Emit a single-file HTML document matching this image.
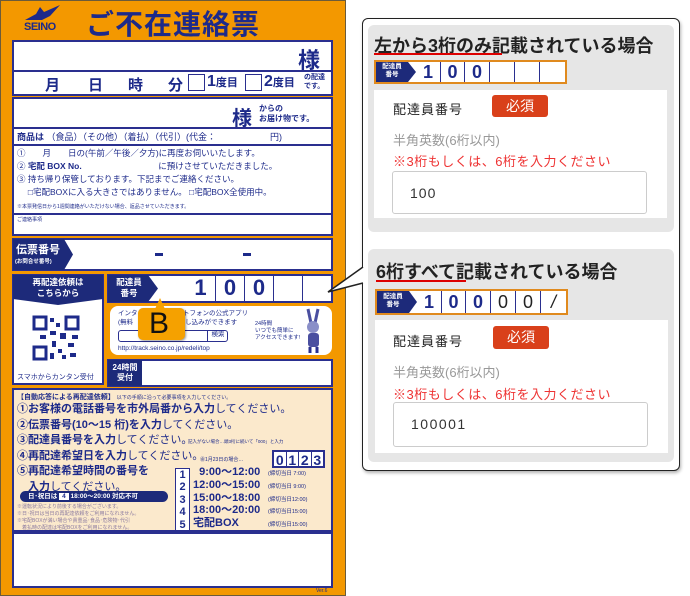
<!DOCTYPE html>
<html><head><meta charset="utf-8"><style>
*{margin:0;padding:0;box-sizing:border-box}
body{width:690px;height:596px;background:#fff;position:relative;overflow:hidden;font-family:"Liberation Sans","Noto Sans CJK JP",sans-serif;color:#1d2a8a}
.a{position:absolute}
.w{background:#fff;border:2px solid #2a2f8f}
.b{font-weight:bold}
.dk{background:#1d2a7a;color:#fff}
.t{white-space:nowrap}
.cell{position:absolute;top:0;height:100%;border-left:1.5px solid #2a2f8f;text-align:center;font-weight:bold}
.card{background:#e6e6e6;border-radius:6px}
.inner{background:#fff}
.badge{background:#d9401a;color:#fff;border-radius:3px;text-align:center;font-size:14px}
.inp{background:#fff;border:1px solid #ccc;border-radius:3px;color:#333;font-size:14px}
.k{color:#222}
</style></head><body>
<!-- LEFT FORM -->
<div class="a" style="left:0;top:0;width:346px;height:596px;background:#f39800;border:1px solid #6b5b3a"></div>
<div class="a b t" style="left:24px;top:21px;font-size:11px;letter-spacing:-0.5px">SEINO</div>
<svg class="a" style="left:22px;top:4px" width="40" height="18"><path d="M3 16 L14 10 L18 3 L22 8 L38 1 L28 12 L20 16Z" fill="#1d2a8a"/></svg>
<div class="a b t" style="left:86px;top:3px;font-size:28px;letter-spacing:1px">ご不在連絡票</div>

<div class="a w" style="left:12px;top:40px;width:321px;height:56px"></div>
<div class="a" style="left:12px;top:70px;width:321px;height:2px;background:#2a2f8f"></div>
<div class="a b t" style="left:298px;top:43px;font-size:22px">様</div>
<div class="a b t" style="left:45px;top:74px;font-size:15px">月</div>
<div class="a b t" style="left:88px;top:74px;font-size:15px">日</div>
<div class="a b t" style="left:128px;top:74px;font-size:15px">時</div>
<div class="a b t" style="left:168px;top:74px;font-size:15px">分</div>
<div class="a" style="left:188px;top:74px;width:17px;height:17px;border:1.5px solid #2a2f8f"></div>
<div class="a b t" style="left:207px;top:73px;font-size:16px">1<span style="font-size:11px">度目</span></div>
<div class="a" style="left:245px;top:74px;width:17px;height:17px;border:1.5px solid #2a2f8f"></div>
<div class="a b t" style="left:264px;top:73px;font-size:16px">2<span style="font-size:11px">度目</span></div>
<div class="a b" style="left:304px;top:73px;font-size:7px;line-height:9px">の配達<br>です。</div>

<div class="a w" style="left:12px;top:97px;width:321px;height:139px"></div>
<div class="a b t" style="left:232px;top:102px;font-size:20px">様</div>
<div class="a b" style="left:259px;top:104px;font-size:8px;line-height:10px">からの<br>お届け物です。</div>
<div class="a" style="left:12px;top:127px;width:321px;height:1.5px;background:#2a2f8f"></div>
<div class="a t" style="left:17px;top:130px;font-size:9px"><b>商品は</b> （食品）（その他）（着払）（代引）(代金：　　　　　　円)</div>
<div class="a" style="left:12px;top:144px;width:321px;height:1.5px;background:#2a2f8f"></div>
<div class="a t" style="left:17px;top:147px;font-size:8.5px;line-height:13px">①　　月　　日の(午前／午後／夕方)に再度お伺いいたします。<br>② <b>宅配 BOX No.</b>　　　　　　　　　に預けさせていただきました。<br>③ 持ち帰り保管しております。下記までご連絡ください。<br>　 □宅配BOXに入る大きさではありません。 □宅配BOX全使用中。</div>
<div class="a t" style="left:17px;top:203px;font-size:5px">※本票発信日から1週間連絡がいただけない場合、返品させていただきます。</div>
<div class="a" style="left:12px;top:213px;width:321px;height:1.5px;background:#2a2f8f"></div>
<div class="a t" style="left:17px;top:216px;font-size:5px">ご連絡事項</div>

<div class="a w" style="left:12px;top:238px;width:321px;height:33px"></div>
<div class="a dk" style="left:13px;top:239px;width:60px;height:31px;clip-path:polygon(0 0,85% 0,100% 50%,85% 100%,0 100%)"></div>
<div class="a b t" style="left:16px;top:241px;font-size:11px;color:#fff">伝票番号</div>
<div class="a b t" style="left:15px;top:257px;font-size:5.5px;color:#fff">(お問合せ番号)</div>
<div class="a" style="left:155px;top:253px;width:8px;height:3px;background:#1d2a8a"></div>
<div class="a" style="left:243px;top:253px;width:8px;height:3px;background:#1d2a8a"></div>

<div class="a w" style="left:12px;top:274px;width:92px;height:111px"></div>
<div class="a dk" style="left:13px;top:275px;width:90px;height:30px;clip-path:polygon(0 0,100% 0,100% 80%,50% 100%,0 80%)"></div>
<div class="a b" style="left:13px;top:277px;width:90px;text-align:center;font-size:8.5px;line-height:11px;color:#fff">再配達依頼は<br>こちらから</div>
<svg class="a" style="left:32px;top:315px" width="50" height="46"><rect x="2" y="2" width="12" height="12" fill="none" stroke="#1d2a8a" stroke-width="3"/><rect x="34" y="2" width="12" height="12" fill="none" stroke="#1d2a8a" stroke-width="3"/><rect x="2" y="32" width="12" height="12" fill="none" stroke="#1d2a8a" stroke-width="3"/><path d="M18 3h4v4h-4zM24 8h4v4h-4zM18 16h6v4h-6zM28 18h6v6h-6zM8 20h6v4h-6zM20 26h4v6h-4zM36 28h6v4h-6zM26 34h4v4h-4zM38 38h6v4h-6zM18 38h4v6h-4zM30 40h4v4h-4zM40 20h6v4h-6z" fill="#1d2a8a"/></svg>
<div class="a t" style="left:17px;top:372px;font-size:7px">スマホからカンタン受付</div>

<div class="a w" style="left:107px;top:274px;width:226px;height:29px"></div>
<div class="a dk" style="left:108px;top:275px;width:50px;height:27px;clip-path:polygon(0 0,80% 0,100% 50%,80% 100%,0 100%)"></div>
<div class="a b" style="left:110px;top:277px;width:38px;text-align:center;font-size:8.5px;line-height:11px;color:#fff">配達員<br>番号</div>
<div class="a" style="left:107px;top:274px;width:226px;height:29px">
<div class="cell" style="left:79px;width:29px;border:none;font-size:22px;line-height:28px">1</div>
<div class="cell" style="left:108px;width:29px;font-size:22px;line-height:28px">0</div>
<div class="cell" style="left:137px;width:29px;font-size:22px;line-height:28px">0</div>
<div class="cell" style="left:166px;width:29px"></div>
<div class="cell" style="left:195px;width:29px"></div>
</div>

<div class="a" style="left:110px;top:306px;width:222px;height:49px;background:#fff;border-radius:8px"></div>
<div class="a t" style="left:118px;top:309px;font-size:6.5px;line-height:9px">インタ　　　　　　　トフォンの公式アプリ<br>(無料　　　　　　　　し込みができます</div>
<div class="a" style="left:118px;top:330px;width:110px;height:12px;border:1.5px solid #2a2f8f;border-radius:3px"></div>
<div class="a" style="left:207px;top:330px;width:21px;height:12px;border-left:1.5px solid #2a2f8f;font-size:6.5px;text-align:center;line-height:10px">検索</div>
<div class="a t" style="left:118px;top:345px;font-size:6.5px">http://track.seino.co.jp/redeli/top</div>
<div class="a t" style="left:255px;top:321px;font-size:5.5px;line-height:7px">24時間<br>いつでも簡単に<br>アクセスできます!</div>
<svg class="a" style="left:298px;top:307px" width="32" height="48"><path d="M10 2l3 14M20 2l-3 14" stroke="#4a4fa0" stroke-width="3"/><ellipse cx="15" cy="20" rx="6" ry="6" fill="#8a8fc8"/><rect x="10" y="26" width="11" height="14" rx="3" fill="#4a4fa0"/><path d="M12 40v6M19 40v6" stroke="#2a2f8f" stroke-width="3"/></svg>
<div class="a" style="left:138px;top:308px;width:47px;height:32px;background:#f5a100;border-radius:5px;box-shadow:1px 1px 2px rgba(0,0,0,.4)"></div>
<div class="a" style="left:155px;top:298px;width:0;height:0;border-left:5px solid transparent;border-right:5px solid transparent;border-bottom:11px solid #f5a100"></div>
<div class="a t" style="left:149px;top:307px;font-size:30px;color:#111">B</div>

<div class="a w" style="left:107px;top:359px;width:226px;height:28px"></div>
<div class="a dk b" style="left:108px;top:360px;width:34px;height:26px;font-size:8px;line-height:10px;text-align:center;padding-top:3px">24時間<br>受付</div>

<div class="a" style="left:12px;top:388px;width:321px;height:144px;background:#fbe9cc;border:2px solid #2a2f8f"></div>
<div class="a t" style="left:17px;top:392px;font-size:7px"><b>【自動応答による再配達依頼】</b> <span style="font-size:5px">以下の手順に沿って必要事項を入力してください。</span></div>
<div class="a b t" style="left:17px;top:402px;font-size:11px;line-height:15.6px">①お客様の電話番号を市外局番から入力<span style="font-weight:normal">してください。</span><br>②伝票番号(10～15 桁)を入力<span style="font-weight:normal">してください。</span><br>③配達員番号を入力<span style="font-weight:normal">してください。</span><br>④再配達希望日を入力<span style="font-weight:normal">してください。</span><br>⑤再配達希望時間の番号を<br>　入力<span style="font-weight:normal">してください。</span></div>
<div class="a t" style="left:188px;top:439px;font-size:4.5px">記入がない場合…頭3桁に続いて「000」と入力</div>
<div class="a t" style="left:200px;top:456px;font-size:5px">㊎1月23日の場合…</div>
<div class="a b" style="left:272px;top:450px;width:53px;height:18px;border:2px solid #2a2f8f;background:#fff;font-size:14px;display:flex"><span style="flex:1;text-align:center;border-right:1px solid #2a2f8f">0</span><span style="flex:1;text-align:center;border-right:1px solid #2a2f8f">1</span><span style="flex:1;text-align:center;border-right:1px solid #2a2f8f">2</span><span style="flex:1;text-align:center">3</span></div>
<div class="a dk b t" style="left:20px;top:491px;width:148px;height:11px;border-radius:6px;font-size:6.5px;line-height:11px;padding-left:8px">日･祝日は <span style="background:#fff;color:#1d2a8a;padding:0 3px">4</span> 18:00～20:00 対応不可</div>
<div class="a t" style="left:17px;top:504px;font-size:5px;line-height:7px;color:#8a7aa0">※運転状況により前後する場合がございます。<br>※日･祝日は当日の再配達依頼をご利用になれません。<br>※宅配BOXが満い場合や貴重品･食品･危険物･代引<br>　着払時の配達は宅配BOXをご利用になれません。</div>
<div class="a b" style="left:175px;top:468px;width:15px;height:63px;border:1.5px solid #2a2f8f;background:#fff;font-size:11px;line-height:12.4px;text-align:center">1<br>2<br>3<br>4<br>5</div>
<div class="a b t" style="left:193px;top:466px;font-size:11px;line-height:12.8px">&nbsp;&nbsp;9:00～12:00<br>12:00～15:00<br>15:00～18:00<br>18:00～20:00<br>宅配BOX</div>
<div class="a t" style="left:268px;top:468px;font-size:5.5px;line-height:12.8px">(締切当日 7:00)<br>(締切当日 9:00)<br>(締切当日12:00)<br>(締切当日15:00)<br>(締切当日15:00)</div>

<div class="a w" style="left:12px;top:532px;width:321px;height:56px"></div>
<div class="a t" style="left:316px;top:588px;font-size:5px">Ver.6</div>

<!-- RIGHT PANEL -->
<div class="a" style="left:362px;top:18px;width:318px;height:453px;border:1.5px solid #222;border-radius:6px;background:#fff;box-shadow:1px 2px 3px rgba(0,0,0,.3)"></div>
<svg class="a" style="left:320px;top:255px" width="50" height="45"><path d="M8 37 L43 12 L43 28Z" fill="#fff"/><path d="M43 12 L8 37 L43 28" fill="none" stroke="#222" stroke-width="1.5"/></svg>

<div class="a card" style="left:368px;top:25px;width:306px;height:207px"></div>
<div class="a b t k" style="left:374px;top:32px;font-size:18px">左から3桁のみ記載されている場合</div>
<div class="a" style="left:374px;top:53px;width:128px;height:2px;border-top:1px solid #d00;border-bottom:1px solid #d00"></div>
<div class="a" style="left:374px;top:60px;width:193px;height:24px;border:2px solid #e08a1e;background:#fff"></div>
<div class="a dk" style="left:376px;top:62px;width:40px;height:20px;clip-path:polygon(0 0,80% 0,100% 50%,80% 100%,0 100%)"></div>
<div class="a b" style="left:376px;top:63px;width:32px;text-align:center;font-size:6.5px;line-height:8px;color:#fff">配達員<br>番号</div>
<div class="a" style="left:376px;top:62px;width:189px;height:20px">
<div class="cell" style="left:40px;width:24px;border:none;font-size:18px;line-height:20px">1</div>
<div class="cell" style="left:64px;width:24px;font-size:18px;line-height:20px">0</div>
<div class="cell" style="left:88px;width:25px;font-size:18px;line-height:20px">0</div>
<div class="cell" style="left:113px;width:25px"></div>
<div class="cell" style="left:138px;width:25px"></div>
<div class="cell" style="left:163px;width:26px"></div>
</div>
<div class="a inner" style="left:374px;top:90px;width:293px;height:128px"></div>
<div class="a t k" style="left:393px;top:99px;font-size:13px;letter-spacing:1px">配達員番号</div>
<div class="a badge" style="left:492px;top:95px;width:56px;height:22px;line-height:22px">必須</div>
<div class="a t" style="left:393px;top:130px;font-size:13px;color:#999">半角英数(6桁以内)</div>
<div class="a t" style="left:393px;top:151px;font-size:13px;color:#e33;letter-spacing:0.5px">※3桁もしくは、6桁を入力ください</div>
<div class="a inp" style="left:392px;top:171px;width:255px;height:43px;padding:13px 0 0 17px;letter-spacing:1px">100</div>

<div class="a card" style="left:368px;top:249px;width:306px;height:213px"></div>
<div class="a b t k" style="left:376px;top:258px;font-size:18px">6桁すべて記載されている場合</div>
<div class="a" style="left:376px;top:280px;width:90px;height:2px;border-top:1px solid #d00;border-bottom:1px solid #d00"></div>
<div class="a" style="left:375px;top:289px;width:193px;height:26px;border:2px solid #e08a1e;background:#fff"></div>
<div class="a dk" style="left:377px;top:291px;width:40px;height:22px;clip-path:polygon(0 0,80% 0,100% 50%,80% 100%,0 100%)"></div>
<div class="a b" style="left:377px;top:293px;width:32px;text-align:center;font-size:6.5px;line-height:8px;color:#fff">配達員<br>番号</div>
<div class="a" style="left:377px;top:291px;width:189px;height:22px">
<div class="cell" style="left:40px;width:24px;border:none;font-size:18px;line-height:22px">1</div>
<div class="cell" style="left:64px;width:24px;font-size:18px;line-height:22px">0</div>
<div class="cell" style="left:88px;width:25px;font-size:18px;line-height:22px">0</div>
<div class="cell" style="left:113px;width:25px;font-size:18px;line-height:22px;color:#222;font-weight:normal">0</div>
<div class="cell" style="left:138px;width:25px;font-size:18px;line-height:22px;color:#222;font-weight:normal">0</div>
<div class="cell" style="left:163px;width:26px;font-size:18px;line-height:22px;color:#222;font-weight:normal;font-style:italic">/</div>
</div>
<div class="a inner" style="left:375px;top:320px;width:293px;height:133px"></div>
<div class="a t k" style="left:393px;top:331px;font-size:13px;letter-spacing:1px">配達員番号</div>
<div class="a badge" style="left:493px;top:326px;width:56px;height:23px;line-height:23px">必須</div>
<div class="a t" style="left:393px;top:362px;font-size:13px;color:#999">半角英数(6桁以内)</div>
<div class="a t" style="left:393px;top:384px;font-size:13px;color:#e33;letter-spacing:0.5px">※3桁もしくは、6桁を入力ください</div>
<div class="a inp" style="left:393px;top:402px;width:255px;height:45px;padding:13px 0 0 17px;letter-spacing:1.5px">100001</div>
</body></html>
